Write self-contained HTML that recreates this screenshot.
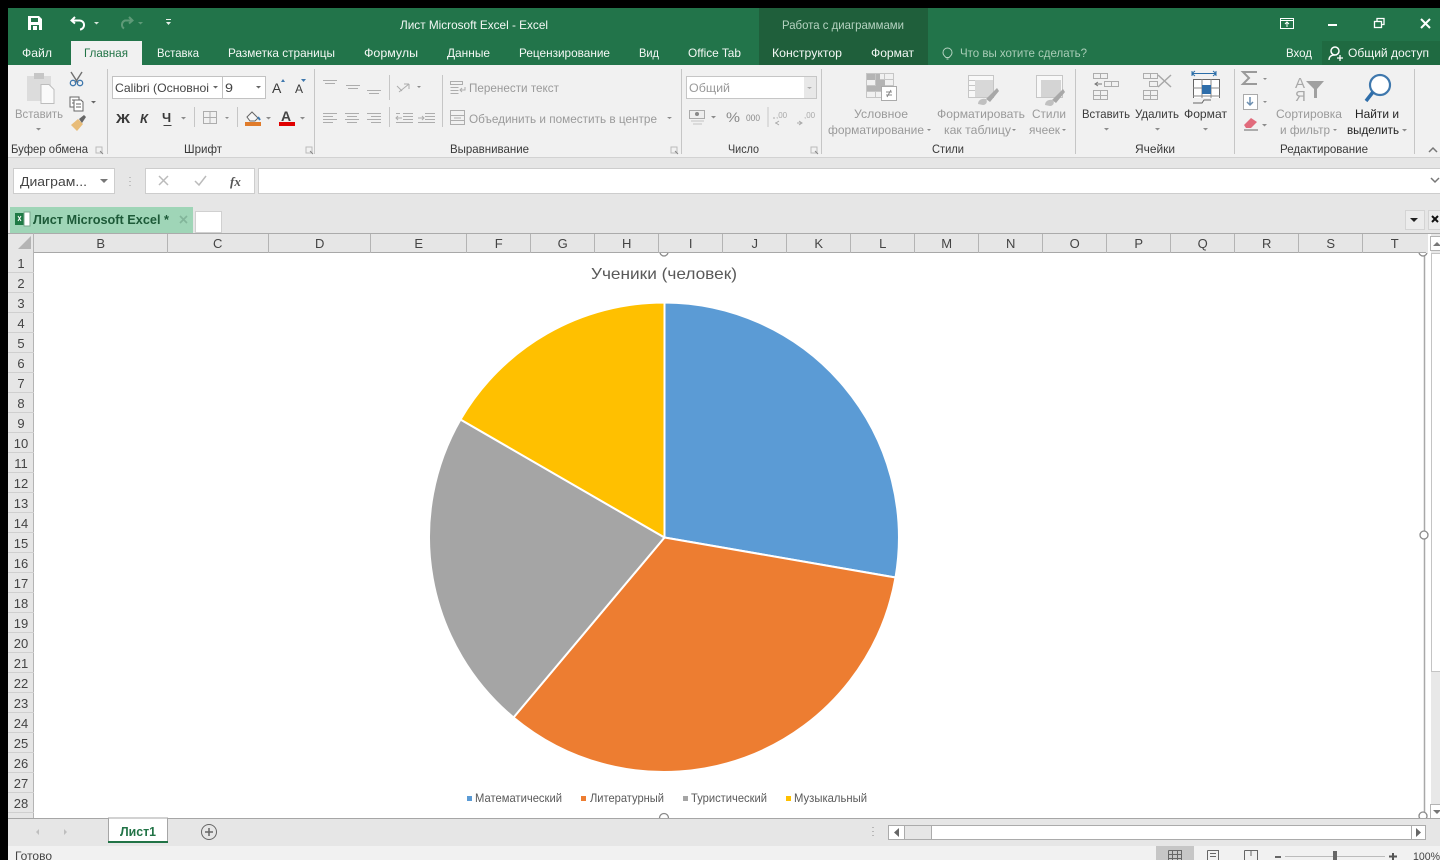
<!DOCTYPE html>
<html><head><meta charset="utf-8"><title>Excel</title>
<style>
html,body{margin:0;padding:0;background:#000;width:1440px;height:860px;overflow:hidden}
svg{display:block;font-family:"Liberation Sans",sans-serif}
text{font-size:12px;fill:#444}
.w text{fill:#f4f8f5}
.d text{fill:#9a9a9a}
.k text{fill:#3a3a3a}
.h text{fill:#444;font-size:13px;text-anchor:middle}
.l{stroke:#c6c6c6;stroke-width:1;fill:none}
.i{stroke:#adadad;stroke-width:1;fill:none}
.a{fill:#8c8c8c}
</style></head><body>
<svg width="1440" height="860" viewBox="0 0 1440 860" xmlns="http://www.w3.org/2000/svg">
<defs><clipPath id="cc"><rect x="34" y="253" width="1396" height="565"/></clipPath></defs>
<rect width="1440" height="860" fill="#000"/>
<!-- title bar -->
<rect x="8" y="8" width="1432" height="57" fill="#22744a"/>
<rect x="759" y="8" width="169" height="57" fill="#1f5f3b"/>
<rect x="1322" y="41" width="118" height="24" fill="#1f6a41"/>
<rect x="71" y="41" width="71" height="24" fill="#f1f1f1"/>
<!-- QAT -->
<path d="M28 16h11l3 3v11h-14z" fill="#fff"/><rect x="31" y="18" width="7" height="4" fill="#22744a"/><rect x="31" y="25" width="8" height="5" fill="#22744a"/><rect x="33" y="26" width="4" height="4" fill="#fff"/>
<path d="M75 17l-3.500 3.500 3.500 3M72 20.500h7a4.500 4.500 0 0 1 1 9" stroke="#fff" stroke-width="2" fill="none"/>
<path d="M94 22h5l-2.500 2.500z" fill="#d5e5da"/>
<path d="M129 17l3.500 3.500-3.500 3M132 20.500h-7a4.500 4.500 0 0 0-1 8" stroke="#5f9a78" stroke-width="2" fill="none"/>
<path d="M138 22h5l-2.500 2.500z" fill="#5f9a78"/>
<path d="M166 19h5v1h-5zM166 22h5l-2.500 3z" fill="#e8f0ea"/>
<g class="w">
<text x="400" y="29" textLength="148" lengthAdjust="spacingAndGlyphs">Лист Microsoft Excel - Excel</text>
<text x="782" y="29" textLength="122" lengthAdjust="spacingAndGlyphs" style="fill:#b6d3c1">Работа с диаграммами</text>
<text x="22" y="57" textLength="30" lengthAdjust="spacingAndGlyphs">Файл</text>
<text x="157" y="57" textLength="42" lengthAdjust="spacingAndGlyphs">Вставка</text>
<text x="228" y="57" textLength="107" lengthAdjust="spacingAndGlyphs">Разметка страницы</text>
<text x="364" y="57" textLength="54" lengthAdjust="spacingAndGlyphs">Формулы</text>
<text x="447" y="57" textLength="43" lengthAdjust="spacingAndGlyphs">Данные</text>
<text x="519" y="57" textLength="91" lengthAdjust="spacingAndGlyphs">Рецензирование</text>
<text x="639" y="57" textLength="20" lengthAdjust="spacingAndGlyphs">Вид</text>
<text x="688" y="57" textLength="53" lengthAdjust="spacingAndGlyphs">Office Tab</text>
<text x="772" y="57" textLength="70" lengthAdjust="spacingAndGlyphs">Конструктор</text>
<text x="871" y="57" textLength="43" lengthAdjust="spacingAndGlyphs">Формат</text>
<text x="960" y="57" textLength="127" lengthAdjust="spacingAndGlyphs" style="fill:#a9cdb7">Что вы хотите сделать?</text>
<text x="1286" y="57" textLength="26" lengthAdjust="spacingAndGlyphs">Вход</text>
<text x="1348" y="57" textLength="81" lengthAdjust="spacingAndGlyphs">Общий доступ</text>
</g>
<text x="84" y="57" textLength="44" lengthAdjust="spacingAndGlyphs" style="fill:#217346">Главная</text>
<path d="M946 57.500c-2-2-3-3-3-5a4.500 4.500 0 0 1 9 0c0 2-1 3-3 5zM946.500 59h2" stroke="#b5d3c1" fill="none"/>
<circle cx="1335" cy="51" r="4" stroke="#fff" stroke-width="1.500" fill="none"/><path d="M1329 60c0-4 3-5 6-5M1337 58h6M1340 55v6" stroke="#fff" stroke-width="1.300" fill="none"/>
<!-- window controls -->
<rect x="1280.500" y="18.500" width="13" height="10" stroke="#fff" fill="none"/><path d="M1280 20.500h14M1287 27v-5M1285 24l2-2 2 2" stroke="#fff" fill="none"/>
<rect x="1328" y="24" width="9" height="2" fill="#fff"/>
<rect x="1374.500" y="21.500" width="7" height="6" stroke="#fff" stroke-width="1.300" fill="none"/><path d="M1377 21v-2.500h7v6h-2.500" stroke="#fff" stroke-width="1.300" fill="none"/>
<path d="M1421 19l9 9M1430 19l-9 9" stroke="#fff" stroke-width="2" fill="none"/>
<!-- ribbon -->
<rect x="8" y="65" width="1432" height="92" fill="#f1f1f1"/>
<rect x="8" y="157" width="1432" height="76" fill="#e6e6e6"/>
<path d="M8 157.500h1432" stroke="#d2d2d2"/>
<g class="l">
<path d="M107.500 69v85M314.500 69v85M681.500 69v85M821.500 69v85M1075.500 69v85M1234.500 69v85M1414.500 69v85"/>
<path d="M194.500 107v20M237.500 107v20M389.500 75v25M389.500 107v20M442.500 75v52M768 107v20"/>
</g>
<!-- clipboard -->
<rect x="27" y="76" width="24" height="25" fill="#dcdcdc"/><rect x="34" y="73" width="10" height="6" fill="#c6c6c6"/>
<path d="M41 84.500h8l5 5v14h-13z" fill="#fafafa" stroke="#bdbdbd"/>
<path d="M71 72l7 11M82 72l-7 11" stroke="#707070" stroke-width="1.400" fill="none"/>
<circle cx="73" cy="83" r="2.700" stroke="#3f78ad" stroke-width="1.300" fill="none"/><circle cx="80" cy="83" r="2.700" stroke="#3f78ad" stroke-width="1.300" fill="none"/>
<path d="M70 97h9v10h-9zM72 100h5M72 103h5" stroke="#666" fill="#fff"/><path d="M74 100h7l2 2v9h-9z" stroke="#666" fill="#fff"/><path d="M76 104h5M76 107h5" stroke="#666"/>
<path d="M91 101h5l-2.500 2.500z" fill="#666"/>
<path d="M71 125l7-6 5 5-6 7z" fill="#e8bc78"/><path d="M79 119l5-4 2 2-4 6z" fill="#666"/>
<g class="d">
<text x="15" y="118" textLength="48" lengthAdjust="spacingAndGlyphs">Вставить</text>
<text x="469" y="92" textLength="90" lengthAdjust="spacingAndGlyphs">Перенести текст</text>
<text x="469" y="123" textLength="188" lengthAdjust="spacingAndGlyphs">Объединить и поместить в центре</text>
<text x="854" y="118" textLength="54" lengthAdjust="spacingAndGlyphs">Условное</text>
<text x="828" y="134" textLength="96" lengthAdjust="spacingAndGlyphs">форматирование</text>
<text x="937" y="118" textLength="88" lengthAdjust="spacingAndGlyphs">Форматировать</text>
<text x="944" y="134" textLength="67" lengthAdjust="spacingAndGlyphs">как таблицу</text>
<text x="1032" y="118" textLength="34" lengthAdjust="spacingAndGlyphs">Стили</text>
<text x="1029" y="134" textLength="31" lengthAdjust="spacingAndGlyphs">ячеек</text>
<text x="1276" y="118" textLength="66" lengthAdjust="spacingAndGlyphs">Сортировка</text>
<text x="1280" y="134" textLength="50" lengthAdjust="spacingAndGlyphs">и фильтр</text>
<text x="726" y="122" textLength="14" lengthAdjust="spacingAndGlyphs" style="font-size:14px;fill:#8a8a8a">%</text>
<text x="746" y="121" textLength="14" lengthAdjust="spacingAndGlyphs" style="font-size:9px;fill:#8a8a8a">000</text>
</g>
<g class="k">
<text x="11" y="153" textLength="77" lengthAdjust="spacingAndGlyphs">Буфер обмена</text>
<text x="184" y="153" textLength="38" lengthAdjust="spacingAndGlyphs">Шрифт</text>
<text x="450" y="153" textLength="79" lengthAdjust="spacingAndGlyphs">Выравнивание</text>
<text x="728" y="153" textLength="31" lengthAdjust="spacingAndGlyphs">Число</text>
<text x="932" y="153" textLength="32" lengthAdjust="spacingAndGlyphs">Стили</text>
<text x="1135" y="153" textLength="40" lengthAdjust="spacingAndGlyphs">Ячейки</text>
<text x="1280" y="153" textLength="88" lengthAdjust="spacingAndGlyphs">Редактирование</text>
<text x="1082" y="118" textLength="48" lengthAdjust="spacingAndGlyphs">Вставить</text>
<text x="1135" y="118" textLength="44" lengthAdjust="spacingAndGlyphs">Удалить</text>
<text x="1184" y="118" textLength="43" lengthAdjust="spacingAndGlyphs">Формат</text>
<text x="1355" y="118" textLength="44" lengthAdjust="spacingAndGlyphs" style="fill:#222">Найти и</text>
<text x="1347" y="134" textLength="52" lengthAdjust="spacingAndGlyphs" style="fill:#222">выделить</text>
<text x="116" y="123" textLength="14" lengthAdjust="spacingAndGlyphs" style="font-weight:bold;font-size:13px">Ж</text>
<text x="140" y="123" style="font-weight:bold;font-style:italic;font-size:13px">К</text>
<text x="162" y="122" style="font-weight:bold;font-size:13px">Ч</text>
<text x="272" y="93" style="font-size:14px">A</text>
<text x="295" y="93" style="font-size:12px">A</text>
</g>
<!-- dropdown arrows -->
<g class="a">
<path d="M36 128h5l-2.500 2.500zM181 117h5l-2.500 2.500zM225 117h4l-2 2zM266 117h5l-2.500 2.500zM300 117h5l-2.500 2.500zM417 86h4l-2 2zM667 117h5l-2.500 2zM711 116h5l-2.500 2.500zM1104 128h5l-2.500 2.500zM1155 128h5l-2.500 2.500zM1203 128h5l-2.500 2.500zM927 129h4l-2 2zM1012 129h4l-2 2zM1062 129h4l-2 2zM1263 78h4l-2 2zM1263 101h4l-2 2zM1262 124h5l-2.500 2.500zM1333 129h4l-2 2zM1402 129h5l-2.500 2.500z"/>
</g>
<!-- font boxes -->
<rect x="112.500" y="76.500" width="153" height="22" fill="#fff" stroke="#c2c2c2"/><path d="M222.500 77v21" stroke="#c2c2c2"/>
<text x="115" y="92" textLength="94" lengthAdjust="spacingAndGlyphs" style="fill:#444">Calibri (Основноі</text>
<text x="225" y="92" textLength="8" lengthAdjust="spacingAndGlyphs" style="fill:#444">9</text>
<path d="M213 86h5l-2.500 2.500zM256 86h5l-2.500 2.500z" fill="#666"/>
<path d="M281 82l2-3 2 3z" fill="#3f78ad"/><path d="M301 79h5l-2.500 3z" fill="#3f78ad"/>
<path d="M163.500 125.500h8" stroke="#444" stroke-width="1"/>
<!-- borders, fill -->
<rect x="203.500" y="111.500" width="13" height="12" class="i"/><path d="M203 117.500h14M210 111v13" class="i"/>
<path d="M247 117l5-5 6 6-3 3h-5z" fill="#f6f6f6" stroke="#666"/><path d="M258 117l2 3" stroke="#3f78ad" stroke-width="2"/>
<rect x="245" y="122" width="16" height="4" fill="#e07b2a"/>
<text x="281" y="121" style="font-weight:bold;font-size:14px;fill:#444">A</text><rect x="279" y="122" width="16" height="4" fill="#e00000"/>
<!-- alignment -->
<g class="i">
<path d="M323 80.500h14M325 83.500h10M346 85.500h14M348 88.500h10M367 90.500h14M369 93.500h10"/>
<path d="M323 113.500h14M323 116.500h10M323 119.500h14M323 122.500h10M345 113.500h14M347 116.500h10M345 119.500h14M347 122.500h10M367 113.500h14M371 116.500h10M367 119.500h14M371 122.500h10"/>
<path d="M403 113.500h10M403 116.500h10M403 119.500h10M396 122.500h17M396 113.500h4M402 118h-6M398 116l-2 2 2 2"/>
<path d="M425 113.500h10M425 116.500h10M425 119.500h10M418 122.500h17M418 118h6M422 116l2 2-2 2"/>
<path d="M399 92l10-8M404 84l5 0M409 84v5M397 86l5 5"/>
<path d="M450.500 81.500h12v3h-12zM450.500 87.500h8M450.500 90.500h8M450.500 93.500h8M460 90h5v-3M462 92l-2-2 2-2"/>
<rect x="450.500" y="110.500" width="14" height="14"/><path d="M451 115.500h13M451 120.500h13M454 118h7"/>
</g>
<!-- number -->
<rect x="686.500" y="76.500" width="130" height="22" fill="#fff" stroke="#c6c6c6"/><rect x="804" y="77" width="12" height="21" fill="#e8e8e8"/>
<text x="689" y="92" textLength="41" lengthAdjust="spacingAndGlyphs" style="fill:#9a9a9a">Общий</text>
<path d="M807 87h5l-2.500 2z" fill="#aaa"/>
<rect x="689.500" y="110.500" width="15" height="8" fill="#eee" stroke="#aaa"/><circle cx="697" cy="114" r="2" fill="#888"/><path d="M691 121h13M693 124h9" stroke="#c4c4c4"/>
<path d="M775 118h-2M777 123h-2M779 121l-3 2 3 2" stroke="#aaa" fill="none"/><path d="M797 123h4M799 121l3 2-3 2" stroke="#aaa" fill="none"/>
<text x="776" y="118" style="font-size:8px;fill:#aaa">,00</text><text x="804" y="118" style="font-size:8px;fill:#aaa">,00</text>
<!-- styles icons -->
<g class="l"><rect x="866.500" y="73.500" width="27" height="24"/><path d="M866 79.500h28M866 85.500h28M866 91.500h28M875.500 73v25M884.500 73v25"/></g>
<path d="M867 74h8v6h-8zM876 80h9v6h-9zM876 74h4v6h-4zM867 86h14v5h-14z" fill="#b4b4b4"/>
<rect x="881.500" y="86.500" width="15" height="14" fill="#fff" stroke="#aaa"/><path d="M886 92h6M886 95h6M891 90l-4 7" stroke="#888" fill="none"/>
<g class="l"><rect x="968.500" y="75.500" width="25" height="22" fill="#f8f8f8"/><path d="M968 80.500h26M968 85.500h26M968 90.500h26"/></g><rect x="975" y="80" width="18" height="17" fill="#d8d8d8"/>
<path d="M986 99l11-11 2 3-9 11z" fill="#a8a8a8"/><path d="M978 104c0-4 4-6 8-5 2 3 0 6-3 6z" fill="#c0c0c0"/>
<g class="l"><rect x="1036.500" y="75.500" width="26" height="22" fill="#f8f8f8"/></g><rect x="1041" y="80" width="20" height="17" fill="#d4d4d4"/>
<path d="M1052 100l11-11 2 3-9 11z" fill="#a8a8a8"/><path d="M1045 105c0-4 4-6 8-5 2 3 0 6-3 6z" fill="#c0c0c0"/>
<!-- cells icons -->
<g class="i">
<path d="M1093.500 73.500h14v5h-14zM1100.500 73v5"/><path d="M1104.500 81.500h14v5h-14zM1111.500 81v5"/><path d="M1093.500 90.500h14v9h-14zM1093.500 95.500h14M1100.500 90v9"/>
<path d="M1143.500 73.500h14v5h-14zM1150.500 73v5M1149.500 81.500h8v5h-8zM1143.500 90.500h14v9h-14zM1143.500 95.500h14M1150.500 90v9"/>
</g>
<path d="M1095 84h7M1098 82l-3 2 3 2" stroke="#777" fill="none"/>
<path d="M1158 75l13 12M1171 75l-13 12" stroke="#a8a8a8" stroke-width="1.500"/>
<path d="M1192 73.500h24M1192 71v5M1216 71v5M1195 71l-3 2.500 3 2.500M1213 71l3 2.500-3 2.500" stroke="#2b6da8" fill="none"/>
<rect x="1193.500" y="79.500" width="26" height="23" fill="#fff" stroke="#666"/><path d="M1193 88h27M1193 96h27M1202 79v23M1211 79v23" stroke="#888"/>
<rect x="1202" y="85" width="9" height="9" fill="#2f6eaa"/><rect x="1192" y="98" width="30" height="5" fill="#f1f1f1"/><path d="M1193 103h9l2-3h7" stroke="#666" fill="none"/>
<!-- edit icons -->
<path d="M1257 72h-14l6 6-6 6h14" stroke="#9a9a9a" stroke-width="2" fill="none"/>
<rect x="1243.500" y="94.500" width="14" height="15" fill="#fff" stroke="#aaa"/><path d="M1250 97v8M1247 102l3 3 3-3" stroke="#6d8fb0" stroke-width="1.500" fill="none"/>
<path d="M1244 125l7-7 6 4-6 6h-5z" fill="#e16b7c"/><path d="M1244 130h14" stroke="#666"/>
<text x="1295" y="88" style="font-size:15px;fill:#a8a8a8">А</text><text x="1295" y="101" style="font-size:15px;fill:#a8a8a8">Я</text>
<path d="M1306 81h18l-7 8v9h-3v-9z" fill="#a0a0a0"/>
<circle cx="1380" cy="85" r="10" stroke="#3f78ad" stroke-width="2.200" fill="#fff"/><path d="M1373 92l-7 9" stroke="#2f6eaa" stroke-width="3.500"/>
<!-- launchers -->
<g fill="none" stroke="#bbb"><path d="M96 147h6v6h-6zM306 147h6v6h-6zM671 147h6v6h-6zM811 147h6v6h-6z"/></g>
<path d="M100 151l3 3M310 151l3 3M675 151l3 3M815 151l3 3" stroke="#888"/>
<path d="M1429 152l4-4 4 4" stroke="#777" stroke-width="1.500" fill="none"/>
<!-- formula bar -->
<rect x="13.500" y="168.500" width="101" height="25" fill="#fff" stroke="#cdcdcd"/>
<text x="20" y="186" textLength="67" lengthAdjust="spacingAndGlyphs" style="font-size:13px;fill:#444">Диаграм...</text>
<path d="M100 179h8l-4 4z" fill="#777"/>
<path d="M130 177v1M130 181v1M130 185v1" stroke="#999"/>
<rect x="145.500" y="168.500" width="109" height="25" fill="#fff" stroke="#cdcdcd"/>
<path d="M159 176l9 9M168 176l-9 9" stroke="#bbb" stroke-width="1.500"/>
<path d="M195 181l4 4 7-9" stroke="#bbb" stroke-width="1.500" fill="none"/>
<text x="230" y="186" style="font-size:13px;font-style:italic;font-weight:bold;font-family:'Liberation Serif',serif;fill:#555">fx</text>
<rect x="258.500" y="168.500" width="1190" height="25" fill="#fff" stroke="#cdcdcd"/>
<path d="M1431 178l4 4 4-4" stroke="#777" stroke-width="1.500" fill="none"/>
<!-- office tab bar -->
<rect x="10" y="207" width="183" height="26" fill="#9fd5b7"/>
<rect x="195.500" y="211.500" width="26" height="21" fill="#fff" stroke="#d0d0d0"/>
<rect x="15" y="213" width="9" height="12" fill="#1f7a45"/><path d="M24 212h6v14h-6z" fill="#fff" stroke="#7aa88c"/><path d="M18 216l3 5M21 216l-3 5" stroke="#fff"/>
<text x="33" y="224" textLength="136" lengthAdjust="spacingAndGlyphs" style="font-weight:bold;font-size:12.500px;fill:#1d5a38">Лист Microsoft Excel *</text>
<path d="M180 216l7 7M187 216l-7 7" stroke="#82b59a" stroke-width="1.600"/>
<rect x="1405.500" y="210.500" width="19" height="19" fill="#ececec" stroke="#d4d4d4"/><path d="M1410 218h8l-4 4z" fill="#222"/>
<rect x="1428.500" y="210.500" width="19" height="19" fill="#ececec" stroke="#d4d4d4"/><path d="M1432 216l6 6M1438 216l-6 6" stroke="#111" stroke-width="2"/>
<!-- grid -->
<rect x="8" y="233" width="1432" height="585" fill="#fff"/>
<rect x="8" y="233" width="1420" height="20" fill="#e6e6e6"/>
<rect x="8" y="253" width="26" height="565" fill="#e6e6e6"/>
<path d="M8 233.500h1432" stroke="#ababab"/>
<path d="M34 252.500h1392" stroke="#a8a8a8"/>
<path d="M33.500 233v585" stroke="#b4b4b4"/>
<path d="M31 236v13h-13z" fill="#b4b4b4"/>
<g stroke="#b4b4b4"><path d="M167.500 234v19M268.500 234v19M370.500 234v19M466.500 234v19M530.500 234v19M594.500 234v19M658.500 234v19M722.500 234v19M786.500 234v19M850.500 234v19M914.500 234v19M978.500 234v19M1042.500 234v19M1106.500 234v19M1170.500 234v19M1234.500 234v19M1298.500 234v19M1362.500 234v19"/></g>
<g stroke="#cfcfcf"><path d="M8 272.500h26M8 292.500h26M8 312.500h26M8 332.500h26M8 352.500h26M8 372.500h26M8 392.500h26M8 412.500h26M8 432.500h26M8 452.500h26M8 472.500h26M8 492.500h26M8 512.500h26M8 532.500h26M8 552.500h26M8 572.500h26M8 592.500h26M8 612.500h26M8 632.500h26M8 652.500h26M8 672.500h26M8 692.500h26M8 712.500h26M8 732.500h26M8 752.500h26M8 772.500h26M8 792.500h26M8 812.500h26"/></g>
<g class="h">
<g transform="translate(0.700,0)"><text x="100" y="248">B</text><text x="217" y="248">C</text><text x="319" y="248">D</text><text x="418" y="248">E</text><text x="498" y="248">F</text><text x="562" y="248">G</text><text x="626" y="248">H</text><text x="690" y="248">I</text><text x="754" y="248">J</text><text x="818" y="248">K</text><text x="882" y="248">L</text><text x="946" y="248">M</text><text x="1010" y="248">N</text><text x="1074" y="248">O</text><text x="1138" y="248">P</text><text x="1202" y="248">Q</text><text x="1266" y="248">R</text><text x="1330" y="248">S</text><text x="1394" y="248">T</text></g>
<text x="21" y="268">1</text><text x="21" y="288">2</text><text x="21" y="308">3</text><text x="21" y="328">4</text><text x="21" y="348">5</text><text x="21" y="368">6</text><text x="21" y="388">7</text><text x="21" y="408">8</text><text x="21" y="428">9</text><text x="21" y="448">10</text><text x="21" y="468">11</text><text x="21" y="488">12</text><text x="21" y="508">13</text><text x="21" y="528">14</text><text x="21" y="548">15</text><text x="21" y="568">16</text><text x="21" y="588">17</text><text x="21" y="608">18</text><text x="21" y="628">19</text><text x="21" y="648">20</text><text x="21" y="668">21</text><text x="21" y="688">22</text><text x="21" y="708">23</text><text x="21" y="728">24</text><text x="21" y="748">25</text><text x="21" y="768">26</text><text x="21" y="788">27</text><text x="21" y="808">28</text>
</g>
<!-- chart -->
<path d="M1424.500 253v565" stroke="#a8a8a8" stroke-width="1.500"/>
<text x="591" y="279" textLength="146" lengthAdjust="spacingAndGlyphs" style="font-size:16px;fill:#595959">Ученики (человек)</text>
<g stroke="#fff" stroke-width="2" stroke-linejoin="round" transform="translate(0.500,0.500)">
<path d="M664 537V302A235 235 0 0 1 895 577Z" fill="#5b9bd5"/>
<path d="M664 537L895 577A235 235 0 0 1 513 717Z" fill="#ed7d31"/>
<path d="M664 537L513 717A235 235 0 0 1 460 419Z" fill="#a5a5a5"/>
<path d="M664 537L460 419A235 235 0 0 1 664 302Z" fill="#ffc000"/>
</g>
<rect x="467" y="796" width="5" height="5" fill="#5b9bd5"/><rect x="581" y="796" width="5" height="5" fill="#ed7d31"/><rect x="683" y="796" width="5" height="5" fill="#a5a5a5"/><rect x="786" y="796" width="5" height="5" fill="#ffc000"/>
<text x="475" y="802" textLength="87" lengthAdjust="spacingAndGlyphs" style="fill:#595959">Математический</text>
<text x="590" y="802" textLength="74" lengthAdjust="spacingAndGlyphs" style="fill:#595959">Литературный</text>
<text x="691" y="802" textLength="76" lengthAdjust="spacingAndGlyphs" style="fill:#595959">Туристический</text>
<text x="794" y="802" textLength="73" lengthAdjust="spacingAndGlyphs" style="fill:#595959">Музыкальный</text>
<!-- handles -->
<g fill="#fff" stroke="#8a8a8a" stroke-width="1.300" clip-path="url(#cc)">
<circle cx="664" cy="252" r="4"/><circle cx="664" cy="818" r="4.500"/><circle cx="1424" cy="535" r="4"/><circle cx="1423" cy="252" r="4"/><circle cx="1423" cy="816" r="4"/>
</g>
<!-- scrollbars -->
<rect x="1431" y="234" width="9" height="584" fill="#e8e8e8"/>
<rect x="1430.500" y="236.500" width="12" height="14" fill="#fff" stroke="#b4b4b4"/><path d="M1433 246l4-4 4 4z" fill="#777"/>
<rect x="1431.500" y="253.500" width="12" height="418" fill="#fff" stroke="#c4c4c4"/>
<rect x="1430.500" y="804.500" width="12" height="14" fill="#fff" stroke="#b4b4b4"/><path d="M1433 810l4 4 4-4z" fill="#777"/>
<!-- sheet tabs -->
<rect x="8" y="818" width="1432" height="28" fill="#e6e6e6"/>
<path d="M8 818.500h100M168 818.500h1272" stroke="#a6a6a6"/>
<rect x="108.500" y="818" width="59" height="24" fill="#fff" stroke="#a6a6a6"/>
<rect x="108" y="841" width="60" height="2" fill="#217346"/>
<rect x="8" y="846" width="1432" height="14" fill="#f1f1f1"/>
<path d="M39 829l-3 3 3 3zM64 829l3 3-3 3z" fill="#bfbfbf"/>
<text x="120" y="836" textLength="36" lengthAdjust="spacingAndGlyphs" style="font-weight:bold;font-size:13px;fill:#217346">Лист1</text>
<circle cx="209" cy="832" r="7.500" fill="none" stroke="#666"/><path d="M205 832h8M209 828v8" stroke="#666" stroke-width="1.500"/>
<path d="M873 827v1M873 831v1M873 835v1" stroke="#888"/>
<rect x="888.500" y="825.500" width="537" height="14" fill="#e6e6e6" stroke="#ababab"/>
<rect x="888.500" y="825.500" width="16" height="14" fill="#fff" stroke="#ababab"/>
<rect x="931.500" y="825.500" width="480" height="14" fill="#fff" stroke="#ababab"/>
<rect x="1411.500" y="825.500" width="14" height="14" fill="#fff" stroke="#ababab"/>
<path d="M899 828l-5 4.500 5 4.500zM1416 828l5 4.500-5 4.500z" fill="#666"/>
<!-- status -->
<text x="15" y="860" textLength="37" lengthAdjust="spacingAndGlyphs" style="fill:#444">Готово</text>
<rect x="1156" y="846" width="38" height="14" fill="#c6c6c6"/>
<g stroke="#666" fill="none"><path d="M1168.500 850.500h13v10h-13M1168.500 850.500v10M1181.500 850.500v10M1172.500 850v10M1177.500 850v10M1168 854.500h14M1168 858.500h14"/>
<path d="M1207.500 850.500h11v10M1207.500 850.500v10M1210 853.500h6M1210 856.500h6"/>
<path d="M1244.500 850.500h13v10M1244.500 850.500v10M1251 850v6"/></g>
<rect x="1275" y="856" width="6" height="2" fill="#666"/>
<path d="M1285 856.500h100" stroke="#bbb"/><rect x="1333" y="851" width="4" height="9" fill="#666"/>
<path d="M1389 856.500h8M1393 853v7" stroke="#555" stroke-width="2"/>
<text x="1413" y="860" textLength="27" lengthAdjust="spacingAndGlyphs" style="font-size:11px;fill:#444">100%</text>
</svg>
</body></html>
